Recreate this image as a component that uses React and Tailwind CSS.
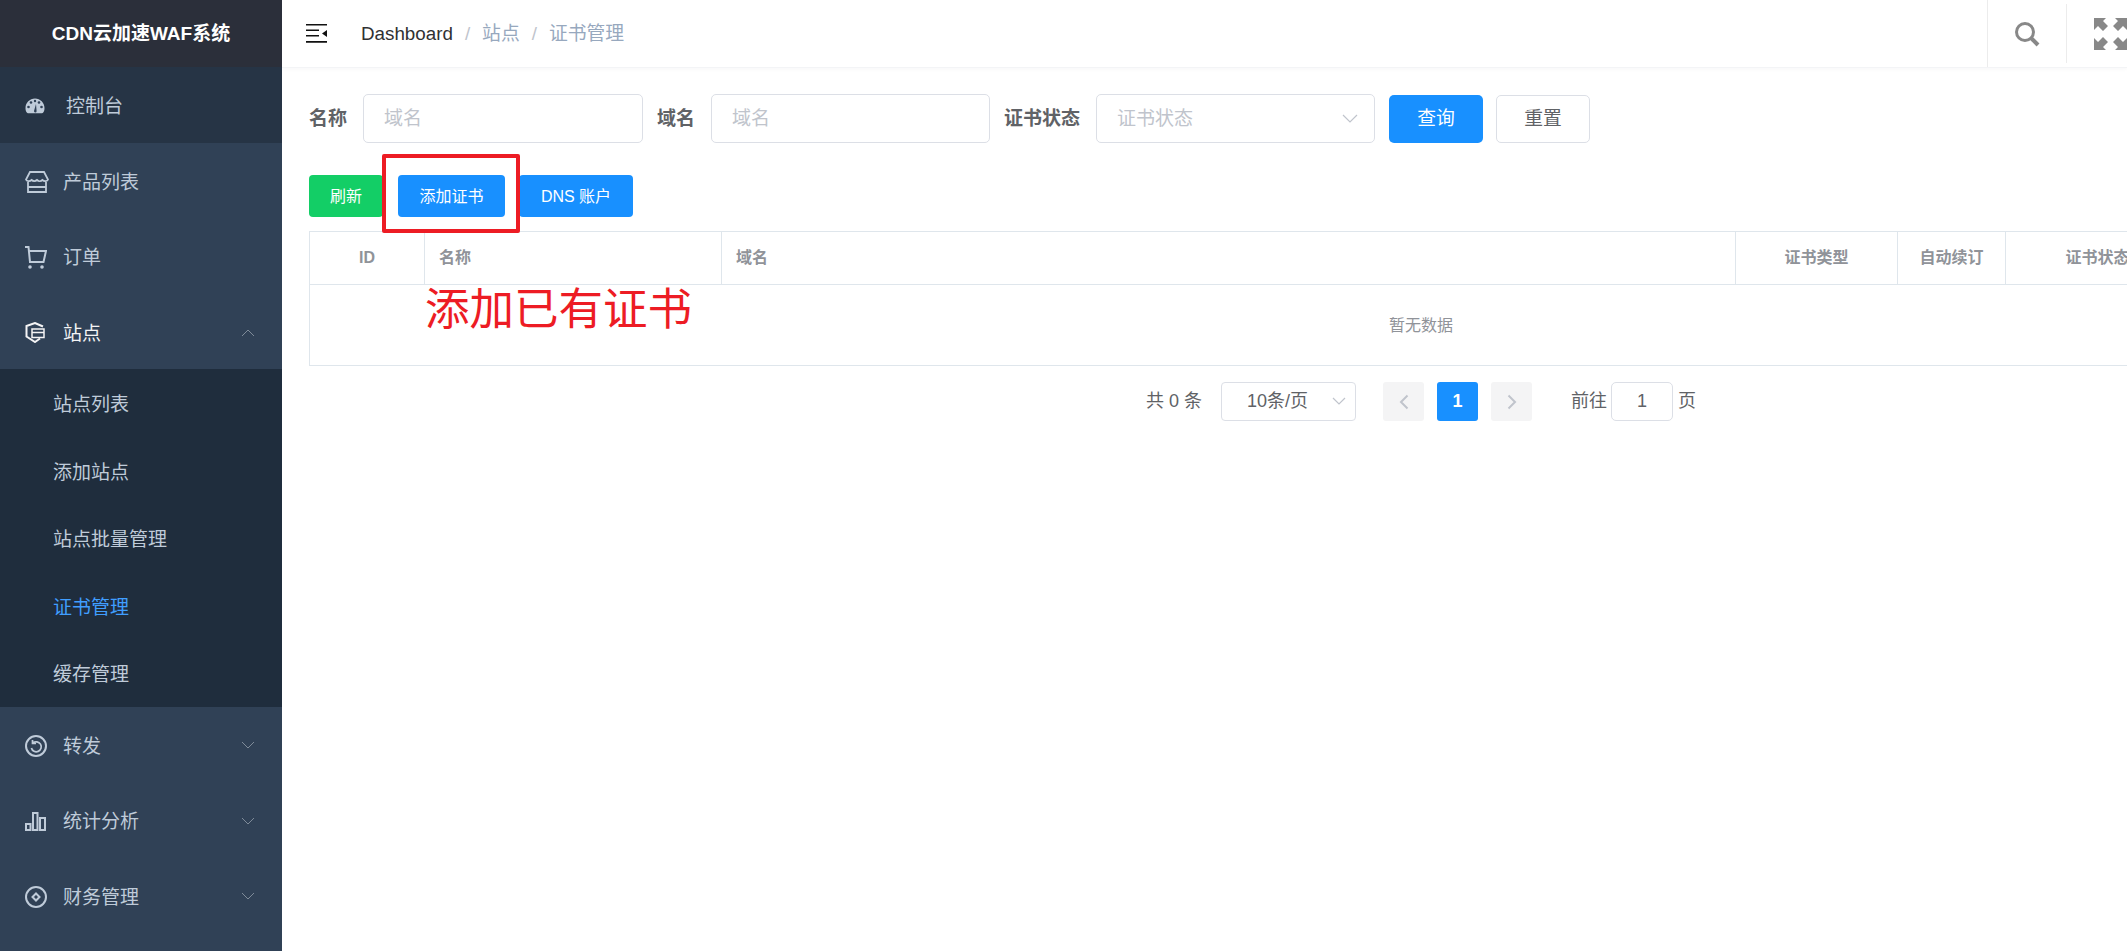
const FONT = 'font-["Liberation_Sans","Noto_Sans_CJK_SC",sans-serif]'

function Chevron({ up }) {
  return (
    <svg width="14" height="9" viewBox="0 0 14 9" fill="none" stroke="#7f8b99" strokeWidth="1" className="ml-auto mr-[27px]">
      <path d={up ? 'M1 8L7 2l6 6' : 'M1 1l6 6 6-6'} />
    </svg>
  )
}

const icons = {
  gauge: (
    <svg width="20" height="16" viewBox="0 0 20 16" fill="#bfcbd9">
      <path d="M10 .5C4.700.5.500 4.800.500 10c0 2 .5 3.600 1.300 4.600.3.400.7.600 1.200.600h14c.5 0 .9-.2 1.200-.6.8-1 1.300-2.600 1.300-4.600C19.500 4.800 15.300.5 10 .5z" />
      <circle cx="3.500" cy="9" r="1.300" fill="#304156" />
      <circle cx="6" cy="4.500" r="1.300" fill="#304156" />
      <circle cx="10" cy="3" r="1.200" fill="#304156" />
      <circle cx="14" cy="4.500" r="1.300" fill="#304156" />
      <circle cx="16.500" cy="9" r="1.300" fill="#304156" />
      <path d="M9 13l2-7 .6 7.300a1.300 1.300 0 0 1-2.600-.3z" fill="#304156" />
    </svg>
  ),
  store: (
    <svg width="24" height="22" viewBox="0 0 24 22" fill="none" stroke="#bfcbd9" strokeWidth="1.800">
      <path d="M5 1h14l4 7.500c-.6 2-3.800 2.200-5.600.5-1.400 1.400-3.900 1.500-5.400 0-1.500 1.500-4 1.400-5.400 0C4.800 10.700 1.600 10.500 1 8.500L5 1z" />
      <path d="M3 11v10h18V11M3 16h18" />
    </svg>
  ),
  cart: (
    <svg width="22" height="23" viewBox="0 0 22 23" fill="none" stroke="#bfcbd9" strokeWidth="2">
      <path d="M0 1h3.500l1.500 15h13.500L21 5H4" />
      <circle cx="5" cy="21" r="1.800" fill="#bfcbd9" stroke="none" />
      <circle cx="17" cy="21" r="1.800" fill="#bfcbd9" stroke="none" />
    </svg>
  ),
  shield: (
    <svg width="20" height="21" viewBox="0 0 20 21" fill="none" stroke="#f4f4f5" strokeWidth="2">
      <path d="M18 4.500L10 1 1.500 4v10.500L10 20l5-3.500" />
      <path d="M7 7h12v8.500H7zM7 10.500h12" strokeWidth="1.500" />
    </svg>
  ),
  forward: (
    <svg width="22" height="22" viewBox="0 0 22 22" fill="none" stroke="#bfcbd9">
      <circle cx="11" cy="11" r="10" strokeWidth="2" />
      <path d="M8 8a5 5 0 1 1-1.600 5M7.500 5v3.500H11" strokeWidth="1.700" />
    </svg>
  ),
  bars: (
    <svg width="21" height="19" viewBox="0 0 21 19" fill="none" stroke="#bfcbd9" strokeWidth="2">
      <path d="M1 12h4.500v6H1zM8 1h4.500v17H8zM15 6h5v12h-5z" />
    </svg>
  ),
  coin: (
    <svg width="22" height="22" viewBox="0 0 22 22" fill="none" stroke="#bfcbd9" strokeWidth="2">
      <circle cx="11" cy="11" r="10" />
      <path d="M11 7.500l3.500 3.500-3.500 3.500L7.500 11z" />
    </svg>
  ),
}

const menuTop = [
  { label: '控制台', icon: 'gauge', dark: true },
  { label: '产品列表', icon: 'store' },
  { label: '订单', icon: 'cart' },
]
const subMenu = ['站点列表', '添加站点', '站点批量管理', '证书管理', '缓存管理']
const menuBottom = [
  { label: '转发', icon: 'forward' },
  { label: '统计分析', icon: 'bars' },
  { label: '财务管理', icon: 'coin' },
]

function MenuItem({ item, active, chevron }) {
  return (
    <div className={`flex items-center h-[75.500px] pt-[3px] ${item.dark ? 'bg-[#263445]' : ''}`}>
      <span className="w-[63px] pl-[25px] flex items-center shrink-0">{icons[item.icon]}</span>
      <span className={`text-[19px] pt-[2px] ${active ? 'text-[#f4f4f5]' : 'text-[#bfcbd9]'} ${item.dark ? 'ml-[3px]' : ''}`}>{item.label}</span>
      {chevron && <Chevron up={chevron === 'up'} />}
    </div>
  )
}

function Sidebar() {
  return (
    <aside className="w-[282px] shrink-0 bg-[#304156] min-h-screen">
      <div className="h-[67px] bg-[#2b2f3a] flex items-center justify-center pt-[1px] text-white font-bold text-[19px]">CDN云加速WAF系统</div>
      {menuTop.map((m) => <MenuItem key={m.label} item={m} />)}
      <MenuItem item={{ label: '站点', icon: 'shield' }} active chevron="up" />
      <div className="bg-[#1f2d3d]">
        {subMenu.map((s) => (
          <div key={s} className={`h-[67.500px] flex items-center pt-[5px] pl-[53px] text-[19px] ${s === '证书管理' ? 'text-[#409eff]' : 'text-[#bfcbd9]'}`}>{s}</div>
        ))}
      </div>
      {menuBottom.map((m) => <MenuItem key={m.label} item={m} chevron="down" />)}
    </aside>
  )
}

function Topbar() {
  return (
    <header className="h-[68px] flex items-center border-b border-[#f3f4f6] shadow-[0_1px_4px_rgba(0,21,41,0.04)] shrink-0">
      <svg width="21" height="19" viewBox="0 0 21 19" fill="#111" className="ml-[24px]">
        <path d="M0 0h21v1.600H0zM0 5.500h13v1.600H0zM0 11h13v1.600H0zM0 17h21v1.800H0zM21 6v7l-5-3.500z" />
      </svg>
      <div className="ml-[34px] pt-[1px] flex items-center text-[18.800px]">
        <span className="text-[#303133]">Dashboard</span>
        <span className="text-[#c0c4cc] mx-[12px]">/</span>
        <span className="text-[#97a8be]">站点</span>
        <span className="text-[#c0c4cc] mx-[12px]">/</span>
        <span className="text-[#97a8be]">证书管理</span>
      </div>
      <div className="ml-auto flex items-center h-full">
        <div className="w-[79px] h-full border-l border-[#ececec] flex items-center justify-center">
          <svg width="26" height="26" viewBox="0 0 26 26" fill="none" stroke="#888" strokeWidth="3">
            <circle cx="11" cy="11" r="8.500" />
            <path d="M17 17l7 7" strokeWidth="4" />
          </svg>
        </div>
        <div className="w-[61px] h-[59px] border-l border-[#ececec] flex items-center pl-[27px]">
          <svg width="33" height="32" viewBox="0 0 33 32" fill="#888" className="shrink-0">
            <path d="M0 0h12L9 3l5 5-5 5-5-5-4 4zM33 0H21l3 3-5 5 5 5 5-5 4 4zM0 32h12l-3-3 5-5-5-5-5 5-4-4zM33 32H21l3-3-5-5 5-5 5 5 4-4z" />
          </svg>
        </div>
      </div>
    </header>
  )
}

function Field({ label, width = 'w-[280px]', select }) {
  return (
    <>
      <label className="text-[19px] pt-[1px] font-bold text-[#606266] mr-[16px] whitespace-nowrap">{label}</label>
      <div className={`${width} h-[49px] border border-[#dcdfe6] rounded-[5px] flex items-center justify-between pt-[1px] pl-[20px] pr-[16px] mr-[14px] text-[19px] text-[#c0c4cc]`}>
        <span>{select || '域名'}</span>
        {select && (
          <svg width="16" height="10" viewBox="0 0 16 10" fill="none" stroke="#c0c4cc" strokeWidth="1.200"><path d="M1 1l7 7 7-7" /></svg>
        )}
      </div>
    </>
  )
}

function Filters() {
  return (
    <div className="flex items-center h-[49px] mt-[26px]">
      <Field label="名称" />
      <Field label="域名" width="w-[279px]" />
      <Field label="证书状态" width="w-[279px]" select="证书状态" />
      <button className="w-[94px] h-[48px] bg-[#1890ff] text-white rounded-[5px] text-[18.800px] pt-[1px]">查询</button>
      <button className="w-[94px] h-[48px] ml-[13px] border border-[#dcdfe6] text-[#606266] rounded-[5px] text-[18.800px] pt-[1px]">重置</button>
    </div>
  )
}

function Toolbar() {
  return (
    <div className="flex items-center mt-[32px] text-[16px] text-white">
      <button className="w-[74px] h-[42px] pt-[1px] bg-[#13ce66] rounded-[4px]">刷新</button>
      <button className="w-[107px] h-[42px] pt-[1px] ml-[15px] bg-[#1890ff] rounded-[4px]">添加证书</button>
      <button className="w-[114px] h-[42px] pt-[1px] ml-[14px] bg-[#1890ff] rounded-[4px]">DNS 账户</button>
    </div>
  )
}

const columns = [
  { label: 'ID', width: 'w-[115px]', center: true },
  { label: '名称', width: 'w-[297px]' },
  { label: '域名', width: 'w-[1014px]' },
  { label: '证书类型', width: 'w-[162px]', center: true },
  { label: '自动续订', width: 'w-[108px]', center: true },
  { label: '证书状态', width: 'w-[184px]', center: true },
]

function CertTable() {
  return (
    <div className="w-[2224px] mt-[14px] border border-[#dfe6ec] text-[16px]">
      <div className="flex h-[53px] border-b border-[#dfe6ec] font-bold text-[#909399]">
        {columns.map((c) => (
          <div key={c.label} className={`${c.width} shrink-0 border-r border-[#dfe6ec] flex items-center ${c.center ? 'justify-center' : 'pl-[14px]'}`}>{c.label}</div>
        ))}
      </div>
      <div className="h-[80px] flex items-center justify-center pt-[1px] text-[#909399]">暂无数据</div>
    </div>
  )
}

function Pagination() {
  return (
    <div className="flex items-center h-[39px] mt-[16px] ml-[837px] text-[18px] text-[#606266]">
      <span className="w-[75px] whitespace-nowrap">共 0 条</span>
      <div className="w-[135px] h-[39px] border border-[#dcdfe6] rounded-[4px] flex items-center justify-between pl-[25px] pr-[9px]">
        <span>10条/页</span>
        <svg width="14" height="9" viewBox="0 0 14 9" fill="none" stroke="#c0c4cc" strokeWidth="1.200"><path d="M1 1l6 6 6-6" /></svg>
      </div>
      <div className="w-[41px] h-[39px] ml-[27px] bg-[#f4f4f5] rounded-[3px] flex items-center justify-center">
        <svg width="10" height="16" viewBox="0 0 10 16" fill="none" stroke="#c0c4cc" strokeWidth="2"><path d="M8.500 1.500L2 8l6.500 6.500" /></svg>
      </div>
      <div className="w-[41px] h-[39px] ml-[13px] bg-[#1890ff] text-white font-bold rounded-[3px] flex items-center justify-center">1</div>
      <div className="w-[41px] h-[39px] ml-[13px] bg-[#f4f4f5] rounded-[3px] flex items-center justify-center">
        <svg width="10" height="16" viewBox="0 0 10 16" fill="none" stroke="#c0c4cc" strokeWidth="2"><path d="M1.500 1.500L8 8l-6.500 6.500" /></svg>
      </div>
      <span className="ml-[39px]">前往</span>
      <div className="w-[62px] h-[39px] ml-[4px] border border-[#dcdfe6] rounded-[5px] flex items-center justify-center">1</div>
      <span className="ml-[5px]">页</span>
    </div>
  )
}

export default function App() {
  return (
    <div className={`flex h-screen overflow-hidden bg-white ${FONT}`}>
      <Sidebar />
      <main className="relative flex-1 min-w-0 overflow-hidden flex flex-col">
        <Topbar />
        <div className="pl-[27px]">
          <Filters />
          <Toolbar />
          <CertTable />
          <Pagination />
        </div>
        {/* red annotation drawn over the page */}
        <div className="absolute left-[100px] top-[154px] w-[138px] h-[79px] border-4 border-[#ed1c24] rounded-[2px]" />
        <div className="absolute left-[143px] top-[284px] text-[44.500px] leading-[52px] text-[#ed1c24] whitespace-nowrap">添加已有证书</div>
      </main>
    </div>
  )
}
